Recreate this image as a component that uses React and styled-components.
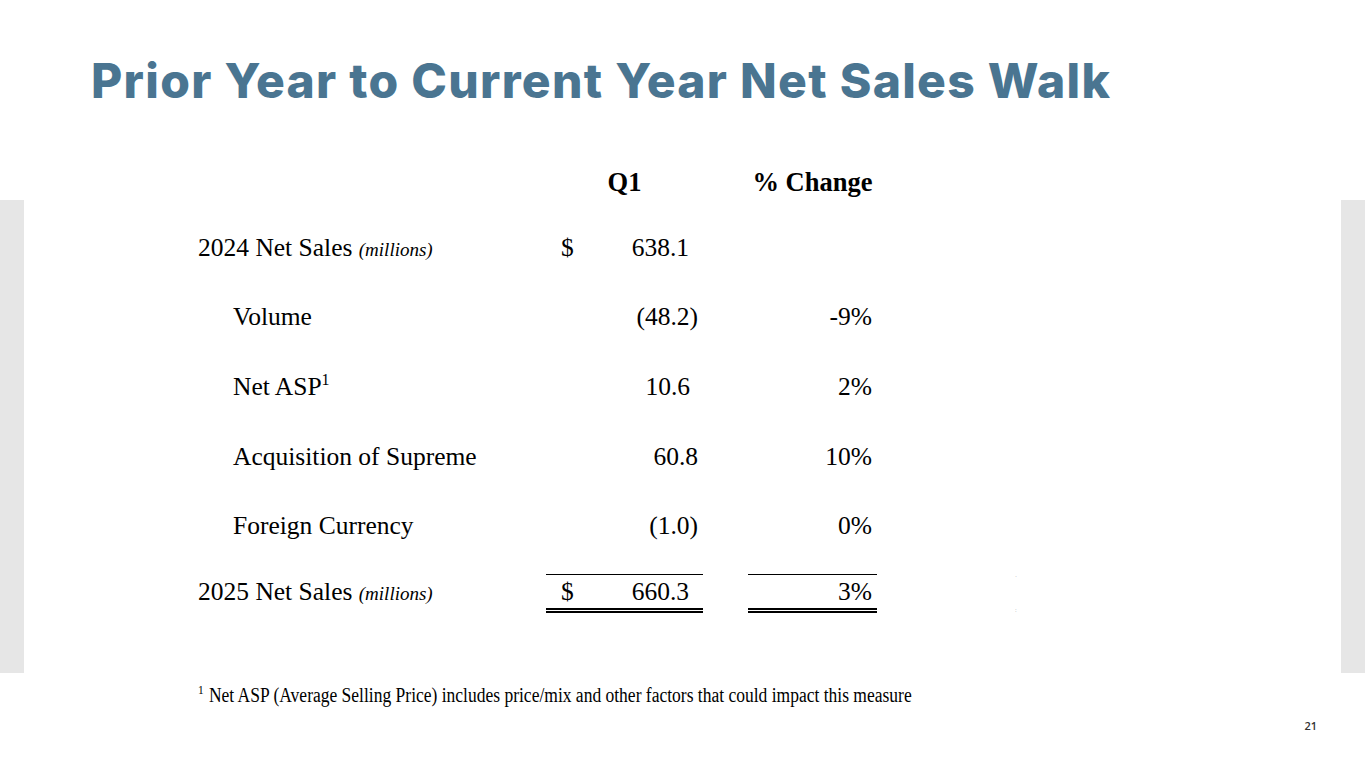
import React from 'react'
import styled, { createGlobalStyle } from 'styled-components'

const GlobalStyle = createGlobalStyle`
  html, body {
    margin: 0;
    padding: 0;
    background: #fff;
  }
  body {
    font-family: 'Liberation Serif', 'Times New Roman', serif;
    color: #000;
  }
`

const Slide = styled.div`
  width: 1365px;
  height: 768px;
  display: grid;
  grid-template-columns: 24px 1fr 24px;
  grid-template-rows: 150px 50px 473px 95px;
  background: #fff;
  overflow: hidden;
`

const Title = styled.h1`
  grid-column: 1 / 4;
  grid-row: 1;
  margin: 0;
  padding: 52px 0 0 91px;
  font-family: Inter, 'Open Sans', sans-serif;
  font-weight: 800;
  font-size: 48px;
  line-height: 58px;
  color: #4a7591;
  letter-spacing: 1.3px;
  white-space: nowrap;
`

const SideBar = styled.div`
  grid-row: 3;
  grid-column: ${p => (p.right ? 3 : 1)};
  background: #e6e6e6;
`

const Table = styled.div`
  grid-column: 2;
  grid-row: 2 / 4;
  padding-left: 174px;
  display: flex;
  flex-direction: column;
  font-size: 25.5px;
`

const Row = styled.div`
  display: grid;
  grid-template-columns: 348px 157px 45px 129px 138px 10px;
  grid-template-rows: ${p => p.h}px;
  height: ${p => p.h}px;
  align-items: center;
`

const Label = styled.div`
  padding-left: ${p => (p.indent ? 35 : 0)}px;
  white-space: nowrap;
  sup {
    font-size: 16px;
    vertical-align: 10px;
    line-height: 0;
  }
`

const Units = styled.span`
  font-style: italic;
  font-size: 19px;
`

const HeadCell = styled.div`
  grid-column: ${p => p.col};
  text-align: center;
  font-weight: 700;
  font-size: 26.5px;
`

const ValueCell = styled.div`
  grid-column: ${p => p.col};
  display: flex;
  justify-content: space-between;
  align-items: center;
  padding: 0 ${p => p.pad}px 0 15px;
  ${p =>
    p.total &&
    `
    align-self: start;
    margin-top: 15px;
    height: 33px;
    border-top: 1px solid #000;
    border-bottom: 5px double #000;
  `}
`

const Dollar = styled.span``

const Amount = styled.span`
  margin-left: auto;
`

const Marker = styled.div`
  grid-column: 6;
  align-self: start;
  margin-top: 14px;
  display: flex;
  flex-direction: column;
  gap: 28px;
  font-family: 'Liberation Sans', sans-serif;
  font-size: 6px;
  line-height: 6px;
  color: #888;
`

const Footer = styled.div`
  grid-column: 1 / 4;
  grid-row: 4;
  display: flex;
  flex-direction: column;
  padding-left: 198px;
`

const Footnote = styled.div`
  margin-top: 11px;
  font-size: 20px;
  white-space: nowrap;
  transform: scaleX(0.875);
  transform-origin: left center;
  sup {
    font-size: 13px;
    vertical-align: 8px;
    line-height: 0;
    margin-right: 6px;
  }
`

const PageNum = styled.div`
  align-self: flex-end;
  margin: 11px 48px 0 0;
  font-family: 'Open Sans', sans-serif;
  font-weight: 600;
  font-size: 11px;
  color: #333;
`

const rows = [
  { label: 'Volume', q1: '(48.2)', pad: 5, pct: '-9%' },
  { label: 'Net ASP', sup: '1', q1: '10.6', pad: 13, pct: '2%' },
  { label: 'Acquisition of Supreme', q1: '60.8', pad: 5, pct: '10%' },
  { label: 'Foreign Currency', q1: '(1.0)', pad: 5, pct: '0%', h: 67 },
]

const App = () => (
  <Slide>
    <GlobalStyle />
    <Title>Prior Year to Current Year Net Sales Walk</Title>
    <SideBar />
    <SideBar right />
    <Table>
      <Row h={64}>
        <div />
        <HeadCell col={2}>Q1</HeadCell>
        <HeadCell col={4}>% Change</HeadCell>
      </Row>
      <Row h={68}>
        <Label>
          2024 Net Sales <Units>(millions)</Units>
        </Label>
        <ValueCell col={2} pad={14}>
          <Dollar>$</Dollar>
          <Amount>638.1</Amount>
        </ValueCell>
      </Row>
      {rows.map(r => (
        <Row key={r.label} h={r.h || 70}>
          <Label indent>
            {r.label}
            {r.sup && <sup>{r.sup}</sup>}
          </Label>
          <ValueCell col={2} pad={r.pad}>
            <Amount>{r.q1}</Amount>
          </ValueCell>
          <ValueCell col={4} pad={5}>
            <Amount>{r.pct}</Amount>
          </ValueCell>
        </Row>
      ))}
      <Row h={66}>
        <Label>
          2025 Net Sales <Units>(millions)</Units>
        </Label>
        <ValueCell col={2} pad={14} total>
          <Dollar>$</Dollar>
          <Amount>660.3</Amount>
        </ValueCell>
        <ValueCell col={4} pad={5} total>
          <Amount>3%</Amount>
        </ValueCell>
        <Marker>
          <span>·</span>
          <span>:</span>
        </Marker>
      </Row>
    </Table>
    <Footer>
      <Footnote>
        <sup>1</sup>Net ASP (Average Selling Price) includes price/mix and
        other factors that could impact this measure
      </Footnote>
      <PageNum>21</PageNum>
    </Footer>
  </Slide>
)

export default App
